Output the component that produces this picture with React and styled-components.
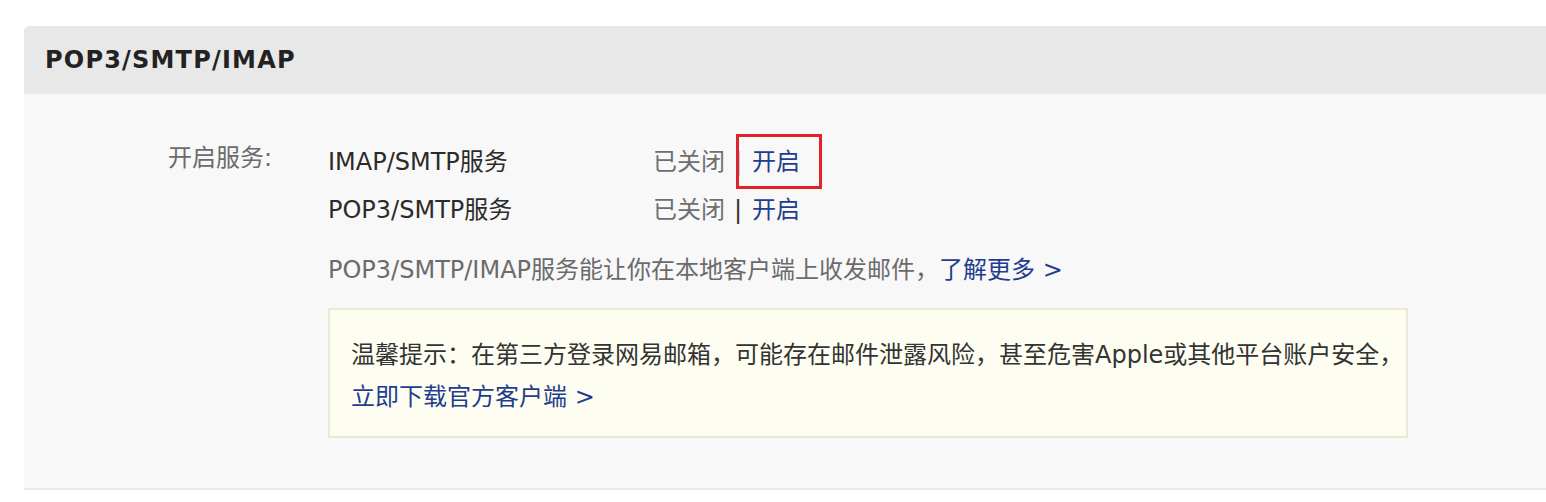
import React from "react";
import styled, { createGlobalStyle } from "styled-components";

const Global = createGlobalStyle`
  html, body { margin: 0; padding: 0; background: #ffffff; }
  body {
    overflow: hidden;
    font-family: "DejaVu Sans", Verdana, "Noto Sans CJK SC", sans-serif;
  }
`;

const Page = styled.div`
  padding: 26px 0 0 24px;
  width: 1546px;
  box-sizing: border-box;
`;

const Card = styled.section`
  width: 1540px;
  border-radius: 5px 5px 0 0;
  overflow: hidden;
  border-bottom: 2px solid #e9e9e9;
`;

const Header = styled.header`
  height: 68px;
  background: #e8e8e8;
  display: flex;
  align-items: center;
  padding-left: 21px;
`;

const Title = styled.h2`
  margin: 0;
  font-family: "DejaVu Sans", Verdana, sans-serif;
  font-weight: bold;
  font-size: 24px;
  letter-spacing: 1.2px;
  color: #222222;
`;

const Body = styled.div`
  background: #f8f8f8;
  height: 394px;
  box-sizing: border-box;
  padding: 42px 0 0 144px;
  display: grid;
  grid-template-columns: 160px 1080px;
  align-items: start;
`;

const Label = styled.div`
  font-size: 24px;
  line-height: 44px;
  color: #6b6b6b;
`;

const Content = styled.div`
  display: flex;
  flex-direction: column;
  padding-top: 2px;
`;

const ServiceRow = styled.div`
  display: grid;
  grid-template-columns: 325px auto;
  font-size: 24px;
  line-height: 48px;
  height: 48px;
`;

const ServiceName = styled.span`
  color: #2b2b2b;
`;

const Status = styled.span`
  color: #6e6e6e;
  display: flex;
  align-items: center;
`;

const Sep = styled.span`
  color: #333;
  margin: 0 10px 0 9px;
`;

const Link = styled.a`
  color: #1f3d8f;
  text-decoration: none;
  cursor: pointer;
`;

const Highlighted = styled.span`
  position: relative;
  &::after {
    content: "";
    position: absolute;
    left: -16px;
    right: -22px;
    top: -4px;
    bottom: -3px;
    border: 3px solid #e0242c;
  }
`;

const Desc = styled.p`
  margin: 12px 0 0;
  font-size: 24px;
  line-height: 48px;
  color: #6b6b6b;
  white-space: nowrap;
`;

const Tip = styled.div`
  margin-top: 14px;
  border: 2px solid #e9e9d6;
  background: #fdfdf1;
  padding: 24px 21px 18px;
  font-size: 24px;
  line-height: 42px;
  color: #333333;
`;

const TipLine = styled.div`
  white-space: nowrap;
`;

export default function App() {
  const services = [
    { name: "IMAP/SMTP服务", highlight: true },
    { name: "POP3/SMTP服务", highlight: false },
  ];
  return (
    <>
      <Global />
      <Page>
        <Card>
          <Header>
            <Title>POP3/SMTP/IMAP</Title>
          </Header>
          <Body>
            <Label>开启服务:</Label>
            <Content>
              {services.map((s) => (
                <ServiceRow key={s.name}>
                  <ServiceName>{s.name}</ServiceName>
                  <Status>
                    已关闭
                    <Sep>|</Sep>
                    {s.highlight ? (
                      <Highlighted>
                        <Link>开启</Link>
                      </Highlighted>
                    ) : (
                      <Link>开启</Link>
                    )}
                  </Status>
                </ServiceRow>
              ))}
              <Desc>
                POP3/SMTP/IMAP服务能让你在本地客户端上收发邮件，<Link>了解更多 &gt;</Link>
              </Desc>
              <Tip>
                <TipLine>温馨提示：在第三方登录网易邮箱，可能存在邮件泄露风险，甚至危害Apple或其他平台账户安全，</TipLine>
                <TipLine>
                  <Link>立即下载官方客户端 &gt;</Link>
                </TipLine>
              </Tip>
            </Content>
          </Body>
        </Card>
      </Page>
    </>
  );
}
